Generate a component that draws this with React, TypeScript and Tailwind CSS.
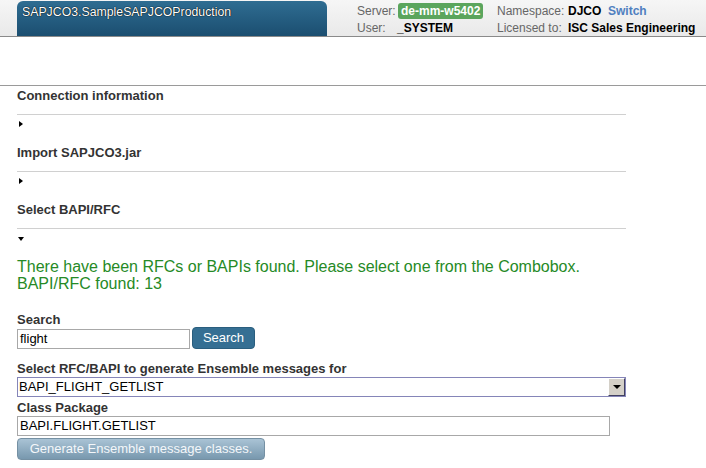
import React from 'react'

const font = { fontFamily: '"Liberation Sans", Arial, sans-serif' }

function Section({ title, open }: { title: string; open?: boolean }) {
  return (
    <>
      <div className="h-[29px] w-[609px] border-b border-[#d0d0d0] pt-[2px] text-[13px] leading-[16px] font-bold text-[#333]">{title}</div>
      <div className="h-[28px] pl-[2px] pt-[6px]">
        {open ? (
          <div className="ml-[-1px] mt-[2px] h-0 w-0 border-x-[3px] border-t-[4px] border-x-transparent border-t-black" />
        ) : (
          <div className="h-0 w-0 border-y-[3px] border-l-[4px] border-y-transparent border-l-black" />
        )}
      </div>
    </>
  )
}

export default function App() {
  return (
    <div className="h-[468px] w-[706px] overflow-hidden bg-white" style={font}>
      {/* top bar */}
      <div className="flex h-[37px] border-b border-[#8a8a8a] bg-gradient-to-b from-[#f6f6f6] to-[#e9e9e9]">
        <div className="ml-[17px] mt-[1px] h-[35px] w-[310px] rounded-t-[6px] bg-gradient-to-b from-[#2f6d92] to-[#1b4e70] pl-[5px] pt-[4px] text-[12.3px] leading-[15px] text-white [text-shadow:0_0_1px_#000,0_0_1px_#000]">
          SAPJCO3.SampleSAPJCOProduction
        </div>
        <div className="ml-[30px] pt-[3px] text-[12px] leading-[16px] text-[#666]">
          <div className="flex items-center">
            <span className="w-[41px]">Server:</span>
            <span className="w-[99px]"><span className="rounded-[3px] bg-[#5ba55d] px-[3px] py-[1px] font-bold text-white">de-mm-w5402</span></span>
            <span className="w-[71px]">Namespace:</span>
            <span className="w-[40px] font-bold text-black">DJCO</span>
            <span className="font-bold text-[#4f7fc0]">Switch</span>
          </div>
          <div className="mt-[1px] flex items-center">
            <span className="w-[40px]">User:</span>
            <span className="w-[100px] font-bold text-black">_SYSTEM</span>
            <span className="w-[71px]">Licensed to:</span>
            <span className="font-bold text-black">ISC Sales Engineering</span>
          </div>
        </div>
      </div>

      <div className="h-[49px] border-b border-[#9a9a9a]" />

      <div className="pl-[17px]">
        <Section title="Connection information" />
        <Section title="Import SAPJCO3.jar" />
        <Section title="Select BAPI/RFC" open />

        <div className="mt-[1px] text-[16px] leading-[17px] text-[#268a26]">
          <div>There have been RFCs or BAPIs found. Please select one from the Combobox.</div>
          <div>BAPI/RFC found: 13</div>
        </div>

        <div className="mt-[20px] text-[13px] leading-[15px] font-bold text-[#333]">Search</div>
        <div className="flex items-end">
          <div className="h-[20px] w-[173px] border border-[#a8a8a8] pl-[2px] text-[13px] leading-[18px] text-black">flight</div>
          <div className="ml-[2px] flex h-[22px] w-[63px] items-center justify-center rounded-[4px] border border-[#2a5e7e] bg-[#356f93] text-[13px] text-white">Search</div>
        </div>

        <div className="mt-[12px] text-[13px] leading-[15px] font-bold text-[#333]">Select RFC/BAPI to generate Ensemble messages for</div>
        <div className="mt-[1px] flex h-[20px] w-[609px] items-center justify-between border border-[#8585b8] text-[13px] leading-[18px] text-black">
          <span className="pl-[1px]">BAPI_FLIGHT_GETLIST</span>
          <span className="flex h-[18px] w-[17px] items-center justify-center border border-t-white border-l-white border-r-[#404060] border-b-[#404060] bg-[#d4d0c8]">
            <span className="h-0 w-0 border-x-[4px] border-t-[4px] border-x-transparent border-t-black" />
          </span>
        </div>

        <div className="mt-[4px] text-[13px] leading-[14px] font-bold text-[#333]">Class Package</div>
        <div className="mt-[1px] h-[20px] w-[593px] border border-[#a8a8a8] pl-[2px] text-[13px] leading-[18px] text-black">BAPI.FLIGHT.GETLIST</div>
        <div className="mt-[2px] flex h-[22px] w-[248px] items-center justify-center rounded-[4px] border border-[#7590a3] bg-gradient-to-b from-[#a9c3d5] to-[#7898ae] text-[13px] text-[#f4f7fa]">
          Generate Ensemble message classes.
        </div>
      </div>
    </div>
  )
}
